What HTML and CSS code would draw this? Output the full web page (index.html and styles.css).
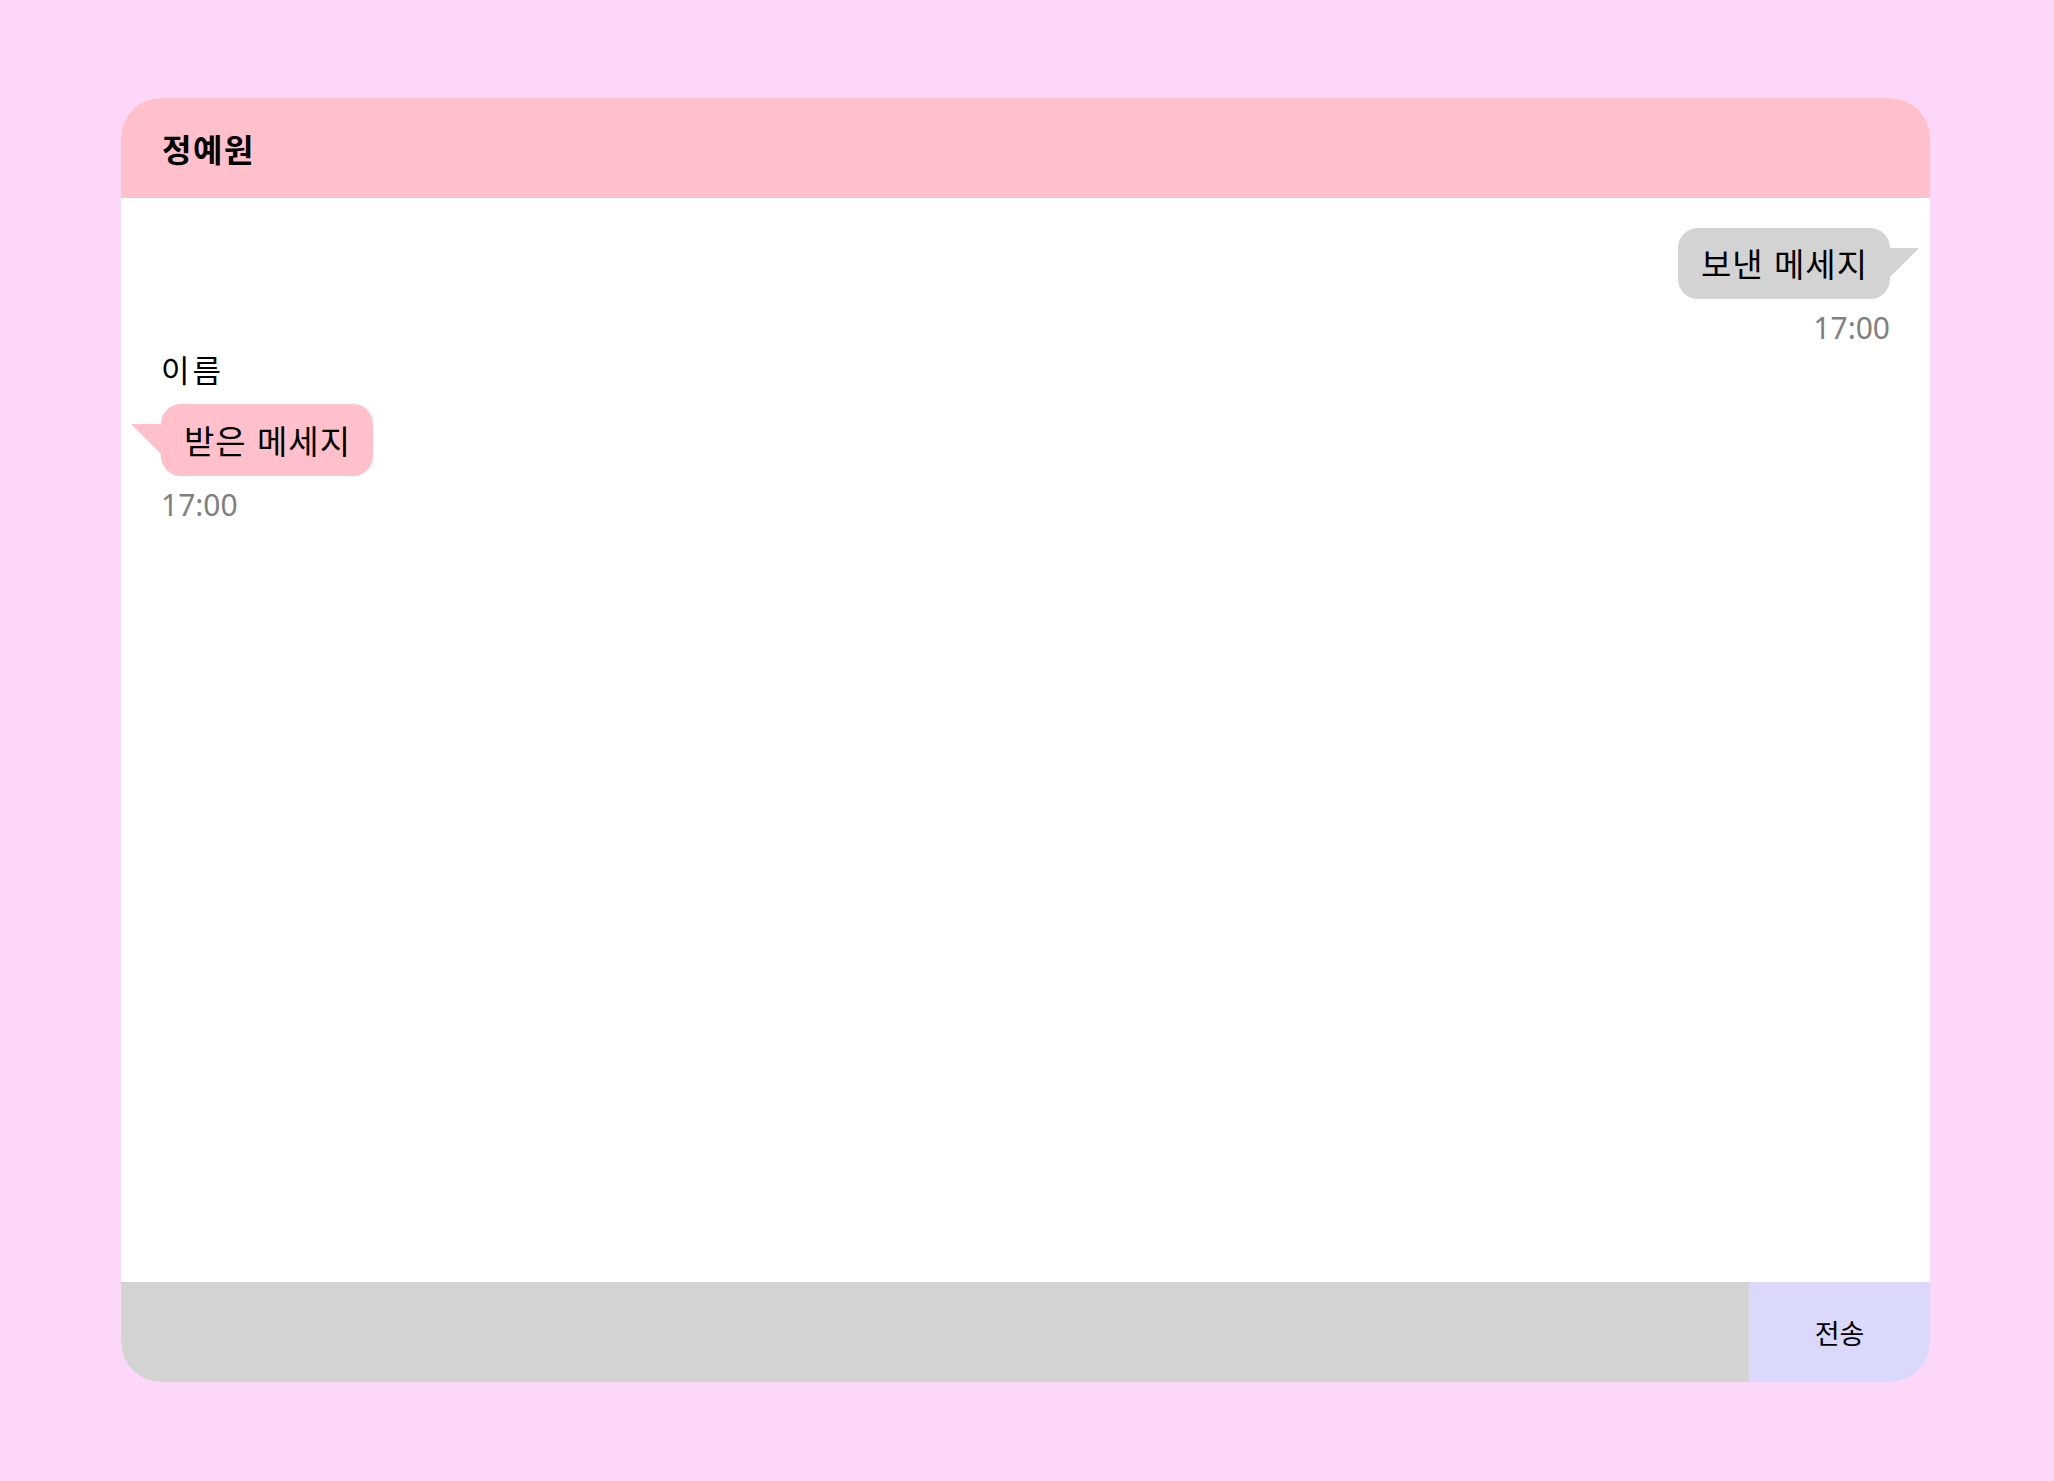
FILE: index.html
```html
<!DOCTYPE html>
<html lang="ko">
  <head>
    <meta charset="UTF-8" />
    <meta name="viewport" content="width=device-width, initial-scale=1.0" />
    <title>채팅</title>
    <link rel="stylesheet" href="styles.css">
  </head>
  <body>
    <div class="chat">
      <header class="chat-header">
        <h1>정예원</h1>
      </header>
      <main class="messages">
        <div class="msg sent">
          <div class="bubble">보낸 메세지</div>
          <div class="time">17:00</div>
        </div>
        <div class="msg received">
          <div class="name">이름</div>
          <div class="bubble">받은 메세지</div>
          <div class="time">17:00</div>
        </div>
      </main>
      <form class="chat-input" onsubmit="return false;">
        <input type="text" />
        <button type="submit">전송</button>
      </form>
    </div>
  </body>
</html>
```

FILE: styles.css
```css
body {
  font-family: "Noto Sans CJK KR", "Noto Sans", sans-serif;
  margin: 0;
  padding: 98px 124px 99px 121px;
  background-color: #fdd7f9;
  color: #000;
}
.chat {
  height: 1284px;
  display: flex;
  flex-direction: column;
  border-radius: 40px;
  overflow: hidden;
  background-color: white;
}
.chat-header {
  height: 100px;
  flex-shrink: 0;
  display: flex;
  align-items: center;
  padding: 0 41px;
  background-color: pink;
}
.chat-header h1 {
  margin: 0;
  font-size: 32px;
  font-weight: bold;
  letter-spacing: 1.5px;
}
.messages {
  flex: 1;
  padding: 30px 40px;
}
.msg {
  display: flex;
  flex-direction: column;
}
.msg.sent {
  align-items: flex-end;
}
.msg.received {
  align-items: flex-start;
}
.bubble {
  position: relative;
  height: 72px;
  line-height: 72px;
  padding: 0 22px 0 23px;
  font-size: 33px;
  letter-spacing: 1px;
  border-radius: 20px;
}
.sent .bubble {
  height: 71px;
  line-height: 71px;
  background-color: lightgray;
}
.sent .bubble::after {
  content: "";
  position: absolute;
  left: 100%;
  top: 20px;
  border-top: 29px solid lightgray;
  border-right: 29px solid transparent;
}
.received .bubble {
  margin-top: 20px;
  background-color: pink;
}
.received .bubble::after {
  content: "";
  position: absolute;
  right: 100%;
  top: 20px;
  border-top: 30px solid pink;
  border-left: 30px solid transparent;
}
.name {
  margin-top: 11px;
  font-size: 31px;
  line-height: 30px;
  letter-spacing: 3px;
}
.time {
  margin-top: 14px;
  font-family: "Noto Sans", "Noto Sans CJK KR", sans-serif;
  font-size: 30px;
  line-height: 30px;
  color: gray;
}
.chat-input {
  height: 100px;
  flex-shrink: 0;
  display: flex;
  margin: 0;
}
.chat-input input {
  flex: 1;
  border: none;
  outline: none;
  padding: 0 20px;
  font-size: 24px;
  font-family: inherit;
  background-color: lightgray;
}
.chat-input button {
  width: 10%;
  border: none;
  font-size: 27px;
  font-family: inherit;
  background-color: #dad8fb;
  cursor: pointer;
}
```
